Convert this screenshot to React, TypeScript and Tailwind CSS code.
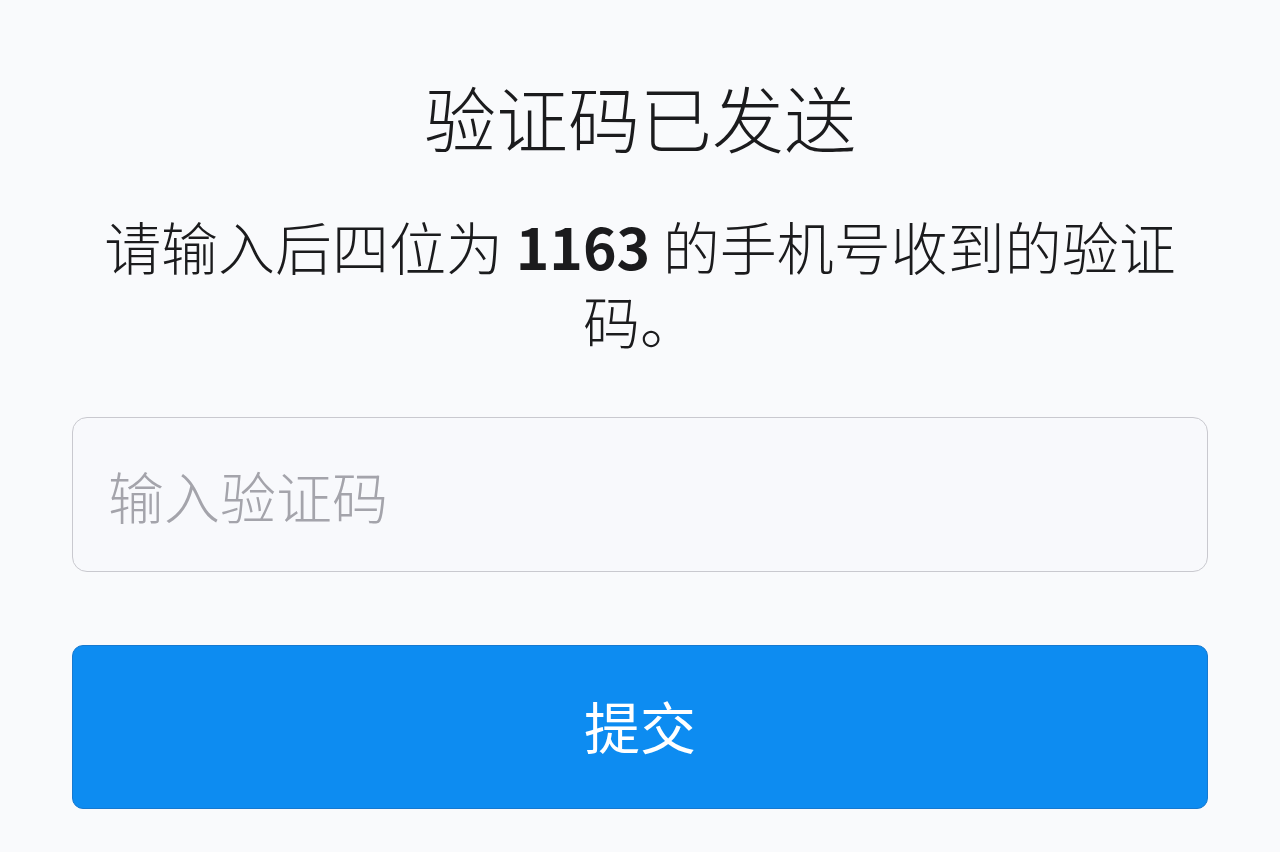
export default function App() {
  return (
    <div
      className="min-h-[852px] w-full bg-[#f9fafc] px-[72px] pt-[76px] text-[#1b1b1d]"
      style={{ fontFamily: '"Noto Sans CJK SC", "Noto Sans", sans-serif' }}
    >
      {/* heading */}
      <h1 className="text-center text-[72px] leading-[80px] font-light">验证码已发送</h1>

      <p className="mx-auto mt-[52px] w-[1100px] text-center text-[57px] leading-[74px] font-light">
        请输入后四位为 <span className="font-bold">1163</span> 的手机号收到的验证码。
      </p>

      <div className="mt-[61px]">
        <input
          type="text"
          placeholder="输入验证码"
          className="h-[155px] w-full rounded-[15px] border border-[#c9c9cf] bg-[#f8f9fc] pl-[35px] text-[56px] font-light outline-none placeholder:text-[#a4a4ab]"
        />
      </div>

      <button className="mt-[73px] flex h-[164px] w-full items-center justify-center rounded-[11px] border border-[#1679d0] bg-[#0d8cf1] pb-[4px] text-[56px] text-white">
        提交
      </button>
    </div>
  );
}
